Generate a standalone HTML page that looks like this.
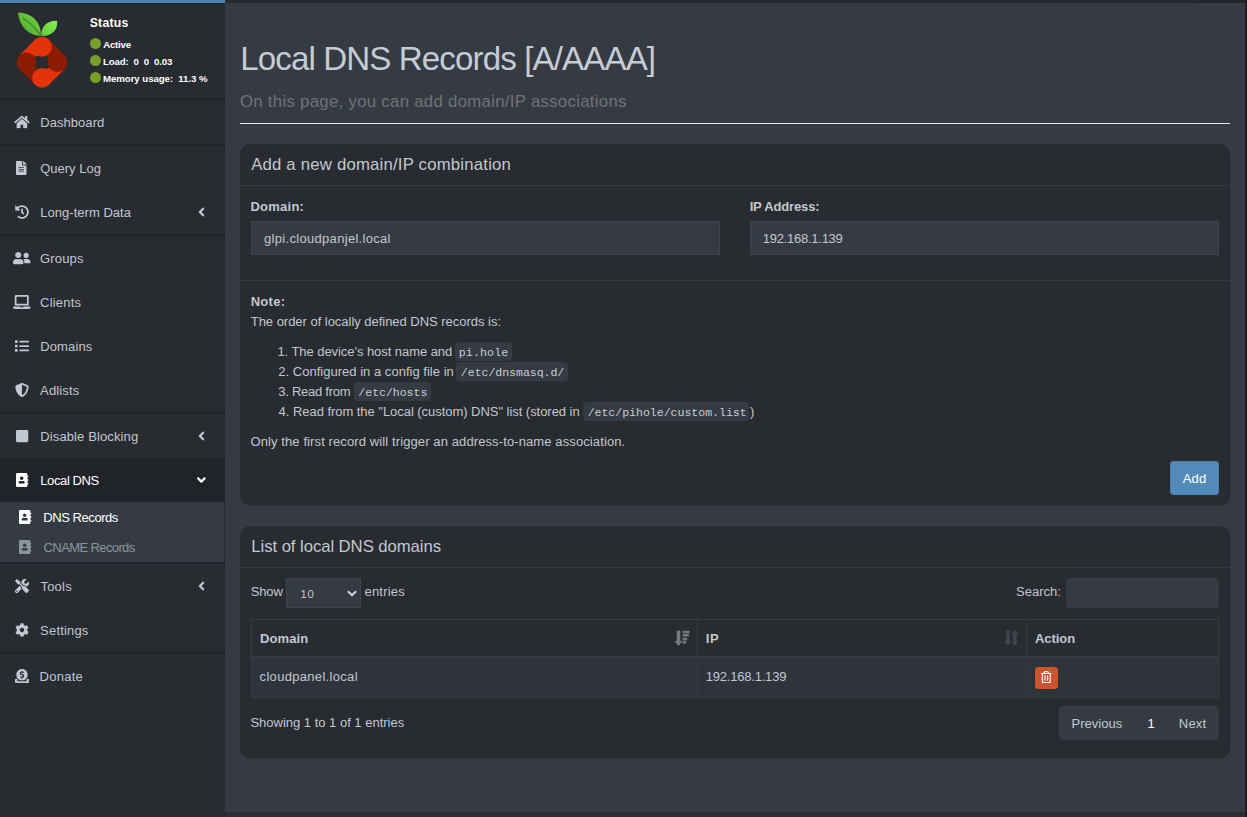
<!DOCTYPE html>
<html lang="en"><head><meta charset="utf-8"><title>Pi-hole - Local DNS Records</title>
<style>

html,body{margin:0;padding:0}
body{width:1247px;height:817px;overflow:hidden;position:relative;background:#363b43;font-family:"Liberation Sans",sans-serif;}
.t{position:absolute;white-space:pre;display:block}
.r{position:absolute;display:block;box-sizing:border-box}
svg{position:absolute;display:block;overflow:visible}

</style></head>
<body>
<!-- bottom edge of fixed header -->
<div id="header-edge">
<div class="r" style="left:0px;top:0px;width:225px;height:3px;background:#4d82b0;"></div>
<div class="r" style="left:225px;top:0px;width:970px;height:3px;background:#272a2f;"></div>
<div class="r" style="left:1195px;top:0px;width:52px;height:3px;background:#222529;"></div>
</div>
<!-- main sidebar: status panel + navigation -->
<aside id="sidebar">
<div class="r" style="left:0px;top:3px;width:225px;height:814px;background:#282b30;"></div>
<div class="r" style="left:0px;top:98px;width:225px;height:2px;background:#212428;"></div>
<div class="r" style="left:0px;top:144px;width:225px;height:2px;background:#212428;"></div>
<div class="r" style="left:0px;top:234px;width:225px;height:2px;background:#212428;"></div>
<div class="r" style="left:0px;top:412px;width:225px;height:2px;background:#212428;"></div>
<div class="r" style="left:0px;top:562px;width:225px;height:2px;background:#212428;"></div>
<div class="r" style="left:0px;top:652px;width:225px;height:2px;background:#212428;"></div>
<div class="r" style="left:0px;top:458px;width:225px;height:44px;background:#202327;"></div>
<div class="r" style="left:0px;top:502px;width:224px;height:60px;background:#363b43;"></div>
<div class="r" style="left:90px;top:38.1px;width:11px;height:11px;background:#76a028;border-radius:50%;"></div>
<div class="r" style="left:90px;top:55.1px;width:11px;height:11px;background:#76a028;border-radius:50%;"></div>
<div class="r" style="left:90px;top:72.2px;width:11px;height:11px;background:#76a028;border-radius:50%;"></div>
<svg width="80" height="95" style="left:0;top:0" viewBox="0 0 80 95"><defs><linearGradient id="lg1" x1="0" y1="1" x2="1" y2="0"><stop offset="0" stop-color="#4fa32e"/><stop offset="1" stop-color="#70d644"/></linearGradient><linearGradient id="lg2" x1="0" y1="1" x2="1" y2="0"><stop offset="0" stop-color="#63c93c"/><stop offset="1" stop-color="#86f052"/></linearGradient></defs><path d="M18 12.9C30 12.2 41.5 21 40.9 35.9C29 35.5 19.5 27 18 12.9Z" fill="url(#lg1)"/><path d="M23 18C29.5 22 36 28.5 40.6 35.7" fill="none" stroke="#3a8826" stroke-width="1.3"/><path d="M57.1 20.9C58.2 29.5 52 36.2 41.4 36C40.8 27 47 20.3 57.1 20.9Z" fill="url(#lg2)"/><path d="M35.07 39.77L19.47 55.37L26.40 62.30L36.00 56.30Q37.00 55.90 38.33 55.79Z" fill="#e2330b"/><circle cx="42.00" cy="46.70" r="9.8" fill="#e2330b"/><path d="M19.47 69.23L35.07 84.83L42.00 77.90L36.00 68.30Q35.60 67.30 35.49 65.97Z" fill="#8c1d03"/><circle cx="26.40" cy="62.30" r="9.8" fill="#8c1d03"/><path d="M48.93 84.83L64.53 69.23L57.60 62.30L48.00 68.30Q47.00 68.70 45.67 68.81Z" fill="#e2330b"/><circle cx="42.00" cy="77.90" r="9.8" fill="#e2330b"/><path d="M64.53 55.37L48.93 39.77L42.00 46.70L48.00 56.30Q48.40 57.30 48.51 58.63Z" fill="#8c1d03"/><circle cx="57.60" cy="62.30" r="9.8" fill="#8c1d03"/><circle cx="42.00" cy="46.70" r="9.8" fill="#e2330b"/></svg><svg width="15.75" height="14.0" viewBox="0 0 576 512" style="left:13.82px;top:115.00px"><path fill="#c1c8cf" d="M280.37 148.26L96 300.11V464a16 16 0 0 0 16 16l112.06-.29a16 16 0 0 0 15.92-16V368a16 16 0 0 1 16-16h64a16 16 0 0 1 16 16v95.64a16 16 0 0 0 16 16.05L464 480a16 16 0 0 0 16-16V300L295.67 148.26a12.19 12.19 0 0 0-15.3 0zM571.6 251.47L488 182.56V44.05a12 12 0 0 0-12-12h-56a12 12 0 0 0-12 12v72.61L318.47 43a48 48 0 0 0-61 0L4.34 251.47a12 12 0 0 0-1.6 16.9l25.5 31A12 12 0 0 0 45.15 301l235.22-193.74a12.19 12.19 0 0 1 15.3 0L530.9 301a12 12 0 0 0 16.9-1.6l25.5-31a12 12 0 0 0-1.7-16.93z"/></svg>
<svg width="10.50" height="14.0" viewBox="0 0 384 512" style="left:16.45px;top:161.00px"><path fill="#c1c8cf" d="M224 136V0H24C10.7 0 0 10.7 0 24v464c0 13.3 10.7 24 24 24h336c13.3 0 24-10.7 24-24V160H248c-13.2 0-24-10.8-24-24zm64 236c0 6.6-5.4 12-12 12H108c-6.6 0-12-5.4-12-12v-8c0-6.6 5.4-12 12-12h168c6.6 0 12 5.4 12 12v8zm0-64c0 6.6-5.4 12-12 12H108c-6.6 0-12-5.4-12-12v-8c0-6.6 5.4-12 12-12h168c6.6 0 12 5.4 12 12v8zm0-72v8c0 6.6-5.4 12-12 12H108c-6.6 0-12-5.4-12-12v-8c0-6.6 5.4-12 12-12h168c6.6 0 12 5.4 12 12zm96-114.1v6.1H256V0h6.1c6.4 0 12.5 2.5 17 7l97.9 98c4.5 4.5 7 10.6 7 16.9z"/></svg>
<svg width="14.00" height="14.0" viewBox="0 0 512 512" style="left:14.70px;top:205.00px"><path fill="#c1c8cf" d="M504 255.531c.253 136.64-111.18 248.372-247.82 248.468-59.015.042-113.223-20.53-155.822-54.911-11.077-8.94-11.905-25.541-1.839-35.607l11.267-11.267c8.609-8.609 22.353-9.551 31.891-1.984C173.062 425.135 212.781 440 256 440c101.705 0 184-82.311 184-184 0-101.705-82.311-184-184-184-48.814 0-93.149 18.969-126.068 49.932l50.754 50.754c10.08 10.08 2.941 27.314-11.313 27.314H24c-8.837 0-16-7.163-16-16V38.627c0-14.254 17.234-21.393 27.314-11.314l49.372 49.372C129.209 34.136 189.552 8 256 8c136.81 0 247.747 110.78 248 247.531zm-180.912 78.784l9.823-12.63c8.138-10.463 6.253-25.542-4.21-33.679L288 256.349V152c0-13.255-10.745-24-24-24h-16c-13.255 0-24 10.745-24 24v135.651l65.409 50.874c10.463 8.137 25.541 6.253 33.679-4.21z"/></svg>
<svg width="17.50" height="14.0" viewBox="0 0 640 512" style="left:12.95px;top:251.00px"><path fill="#c1c8cf" d="M192 256c61.9 0 112-50.1 112-112S253.9 32 192 32 80 82.1 80 144s50.1 112 112 112zm76.8 32h-8.3c-20.8 10-43.900 16-68.500 16s-47.600-6-68.500-16h-8.300C51.600 288 0 339.600 0 403.200V432c0 26.500 21.500 48 48 48h288c26.500 0 48-21.500 48-48v-28.800c0-63.600-51.600-115.200-115.200-115.200zM480 256c53 0 96-43 96-96s-43-96-96-96-96 43-96 96 43 96 96 96zm48 32h-3.800c-13.900 4.800-28.600 8-44.200 8s-30.300-3.200-44.200-8H432c-20.400 0-39.200 5.900-55.700 15.400 24.400 26.300 39.700 61.200 39.700 99.800v38.400c0 2.200-.5 4.300-.6 6.400H592c26.500 0 48-21.500 48-48 0-61.900-50.100-112-112-112z"/></svg>
<svg width="17.50" height="14.0" viewBox="0 0 640 512" style="left:12.95px;top:295.00px"><path fill="#c1c8cf" d="M624 416H381.540c-.740 19.810-14.710 32-32.740 32H288c-18.690 0-33.020-17.470-32.770-32H16c-8.800 0-16 7.200-16 16v16c0 35.200 28.800 64 64 64h512c35.200 0 64-28.800 64-64v-16c0-8.800-7.200-16-16-16zM576 48c0-26.400-21.600-48-48-48H112C85.600 0 64 21.600 64 48v336h512V48zm-64 272H128V64h384v256z"/></svg>
<svg width="14.00" height="14.0" viewBox="0 0 512 512" style="left:14.70px;top:339.00px"><path fill="#c1c8cf" d="M80 368H16a16 16 0 0 0-16 16v64a16 16 0 0 0 16 16h64a16 16 0 0 0 16-16v-64a16 16 0 0 0-16-16zm0-320H16A16 16 0 0 0 0 64v64a16 16 0 0 0 16 16h64a16 16 0 0 0 16-16V64a16 16 0 0 0-16-16zm0 160H16a16 16 0 0 0-16 16v64a16 16 0 0 0 16 16h64a16 16 0 0 0 16-16v-64a16 16 0 0 0-16-16zm416 176H176a16 16 0 0 0-16 16v32a16 16 0 0 0 16 16h320a16 16 0 0 0 16-16v-32a16 16 0 0 0-16-16zm0-320H176a16 16 0 0 0-16 16v32a16 16 0 0 0 16 16h320a16 16 0 0 0 16-16V80a16 16 0 0 0-16-16zm0 160H176a16 16 0 0 0-16 16v32a16 16 0 0 0 16 16h320a16 16 0 0 0 16-16v-32a16 16 0 0 0-16-16z"/></svg>
<svg width="14.00" height="14.0" viewBox="0 0 512 512" style="left:14.70px;top:383.00px"><path fill="#c1c8cf" d="M466.5 83.7l-192-80a48.150 48.150 0 0 0-36.900 0l-192 80C27.700 91.100 16 108.600 16 128c0 198.500 114.500 335.700 221.500 380.300 11.800 4.900 25.100 4.900 36.900 0C360.100 472.600 496 349.300 496 128c0-19.400-11.700-36.900-29.500-44.300zM256.100 446.300l-.1-381 175.900 73.300c-3.300 151.400-82.100 261.100-175.800 307.700z"/></svg>
<svg width="12.25" height="14.0" viewBox="0 0 448 512" style="left:15.57px;top:429.00px"><path fill="#c1c8cf" d="M400 32H48C21.5 32 0 53.5 0 80v352c0 26.500 21.500 48 48 48h352c26.500 0 48-21.500 48-48V80c0-26.500-21.500-48-48-48z"/></svg>
<svg width="14.00" height="14.0" viewBox="0 0 512 512" style="left:14.70px;top:579.00px"><path fill="#c1c8cf" d="M501.1 395.700L384 278.600c-23.100-23.100-57.600-27.600-85.400-13.900L192 158.100V96L64 0 0 64l96 128h62.100l106.600 106.600c-13.600 27.800-9.200 62.300 13.900 85.400l117.100 117.100c14.600 14.600 38.200 14.600 52.700 0l52.700-52.700c14.500-14.600 14.500-38.200 0-52.700zM331.700 225c28.300 0 54.900 11 74.900 31l19.400 19.400c15.800-6.900 30.800-16.500 43.800-29.500 37.100-37.100 49.700-89.300 37.900-136.700-2.200-9-13.500-12.100-20.100-5.500l-74.400 74.400-67.900-11.300L334 98.900l74.400-74.400c6.600-6.600 3.400-17.900-5.700-20.200-47.400-11.700-99.600.9-136.600 37.900-28.500 28.500-41.900 66.100-41.200 103.600l82.100 82.100c8.100-1.900 16.500-2.900 24.700-2.900zm-103.900 82l-56.700-56.700L18.700 402.800c-25 25-25 65.500 0 90.500s65.500 25 90.500 0l123.600-123.600c-7.600-19.900-9.900-41.600-5-62.700zM64 472c-13.200 0-24-10.800-24-24 0-13.300 10.700-24 24-24s24 10.700 24 24c0 13.200-10.700 24-24 24z"/></svg>
<svg width="14.00" height="14.0" viewBox="0 0 512 512" style="left:14.70px;top:623.00px"><path fill="#c1c8cf" d="M487.400 315.700l-42.600-24.600c4.300-23.200 4.300-47 0-70.200l42.600-24.600c4.900-2.800 7.100-8.600 5.500-14-11.100-35.600-30-67.800-54.700-94.600-3.800-4.100-10-5.100-14.800-2.300L380.800 110c-17.900-15.400-38.500-27.300-60.800-35.100V25.800c0-5.600-3.900-10.500-9.400-11.700-36.700-8.200-74.300-7.800-109.200 0-5.500 1.200-9.400 6.100-9.400 11.700V75c-22.200 7.900-42.800 19.800-60.800 35.100L88.700 85.500c-4.900-2.800-11-1.900-14.800 2.300-24.700 26.700-43.600 58.900-54.700 94.600-1.700 5.400.6 11.200 5.500 14L67.300 221c-4.300 23.200-4.300 47 0 70.200l-42.600 24.600c-4.900 2.800-7.100 8.600-5.500 14 11.100 35.600 30 67.800 54.700 94.600 3.800 4.100 10 5.100 14.800 2.300l42.600-24.600c17.900 15.400 38.500 27.300 60.800 35.100v49.200c0 5.600 3.900 10.500 9.400 11.700 36.700 8.200 74.300 7.800 109.200 0 5.500-1.200 9.400-6.100 9.400-11.700v-49.200c22.200-7.900 42.800-19.800 60.800-35.100l42.600 24.600c4.900 2.800 11 1.900 14.800-2.300 24.700-26.700 43.600-58.900 54.700-94.600 1.500-5.500-.7-11.300-5.600-14.100zM256 336c-44.100 0-80-35.900-80-80s35.900-80 80-80 80 35.900 80 80-35.900 80-80 80z"/></svg>
<svg width="14.00" height="14.0" viewBox="0 0 512 512" style="left:14.70px;top:669.00px"><path fill="#c1c8cf" d="M256 416c114.900 0 208-93.100 208-208S370.900 0 256 0 48 93.100 48 208s93.100 208 208 208zM233.800 97.400V80.600c0-9.200 7.400-16.600 16.600-16.600h11.100c9.200 0 16.600 7.400 16.600 16.600v17c15.500.8 30.500 6.100 43 15.400 5.600 4.100 6.200 12.300 1.200 17.100L306 145.600c-3.800 3.700-9.500 3.800-14 1-5.400-3.400-11.400-5.100-17.800-5.100h-38.900c-9 0-16.300 8.200-16.300 18.300 0 8.200 5 15.500 12.100 17.600l62.300 18.700c25.700 7.700 43.700 32.400 43.700 60.100 0 34-26.400 61.500-59.100 62.400v16.800c0 9.200-7.400 16.600-16.600 16.600h-11.100c-9.200 0-16.600-7.400-16.600-16.600v-17c-15.500-.8-30.500-6.100-43-15.400-5.600-4.100-6.200-12.300-1.200-17.100l16.300-15.500c3.800-3.700 9.500-3.800 14-1 5.400 3.400 11.400 5.100 17.800 5.100h38.900c9 0 16.300-8.200 16.300-18.300 0-8.200-5-15.500-12.100-17.600l-62.300-18.700c-25.700-7.700-43.700-32.400-43.700-60.100.1-34 26.400-61.500 59.100-62.400zM480 352h-32.500c-19.600 26-44.600 47.700-73 64h63.800c5.300 0 9.600 3.600 9.600 8v16c0 4.400-4.300 8-9.600 8H73.600c-5.300 0-9.600-3.600-9.600-8v-16c0-4.400 4.300-8 9.600-8h63.800c-28.400-16.300-53.300-38-73-64H32c-17.700 0-32 14.300-32 32v96c0 17.700 14.300 32 32 32h448c17.700 0 32-14.300 32-32v-96c0-17.700-14.300-32-32-32z"/></svg>
<svg width="12.25" height="14.0" viewBox="0 0 448 512" style="left:15.57px;top:473.00px"><path fill="#fff" d="M436 160c6.600 0 12-5.400 12-12v-40c0-6.600-5.400-12-12-12h-20V48c0-26.500-21.500-48-48-48H48C21.500 0 0 21.500 0 48v416c0 26.500 21.500 48 48 48h320c26.500 0 48-21.500 48-48v-48h20c6.600 0 12-5.400 12-12v-40c0-6.600-5.400-12-12-12h-20v-64h20c6.600 0 12-5.400 12-12v-40c0-6.600-5.400-12-12-12h-20v-64h20zm-228-32c35.300 0 64 28.700 64 64s-28.700 64-64 64-64-28.700-64-64 28.700-64 64-64zm112 236.800c0 10.600-10 19.200-22.400 19.200H118.400C106 384 96 375.400 96 364.800v-19.200c0-31.800 30.100-57.600 67.200-57.600h5c12.300 5.100 25.700 8 39.800 8s27.600-2.900 39.800-8h5c37.100 0 67.200 25.800 67.200 57.600v19.200z"/></svg>
<svg width="12.25" height="14.0" viewBox="0 0 448 512" style="left:18.57px;top:510.00px"><path fill="#fff" d="M436 160c6.600 0 12-5.400 12-12v-40c0-6.600-5.400-12-12-12h-20V48c0-26.500-21.500-48-48-48H48C21.500 0 0 21.500 0 48v416c0 26.500 21.500 48 48 48h320c26.500 0 48-21.500 48-48v-48h20c6.600 0 12-5.400 12-12v-40c0-6.600-5.400-12-12-12h-20v-64h20c6.600 0 12-5.400 12-12v-40c0-6.600-5.400-12-12-12h-20v-64h20zm-228-32c35.300 0 64 28.700 64 64s-28.700 64-64 64-64-28.700-64-64 28.700-64 64-64zm112 236.800c0 10.600-10 19.200-22.400 19.200H118.400C106 384 96 375.400 96 364.800v-19.200c0-31.800 30.100-57.600 67.200-57.600h5c12.300 5.100 25.700 8 39.800 8s27.600-2.900 39.800-8h5c37.100 0 67.200 25.800 67.200 57.600v19.200z"/></svg>
<svg width="12.25" height="14.0" viewBox="0 0 448 512" style="left:18.57px;top:540.00px"><path fill="#8a949f" d="M436 160c6.600 0 12-5.400 12-12v-40c0-6.600-5.400-12-12-12h-20V48c0-26.500-21.500-48-48-48H48C21.500 0 0 21.500 0 48v416c0 26.500 21.500 48 48 48h320c26.500 0 48-21.500 48-48v-48h20c6.600 0 12-5.400 12-12v-40c0-6.600-5.400-12-12-12h-20v-64h20c6.600 0 12-5.400 12-12v-40c0-6.600-5.400-12-12-12h-20v-64h20zm-228-32c35.300 0 64 28.700 64 64s-28.700 64-64 64-64-28.700-64-64 28.700-64 64-64zm112 236.800c0 10.600-10 19.200-22.400 19.200H118.400C106 384 96 375.400 96 364.800v-19.200c0-31.800 30.100-57.600 67.200-57.600h5c12.300 5.100 25.700 8 39.800 8s27.600-2.900 39.800-8h5c37.100 0 67.200 25.800 67.200 57.600v19.200z"/></svg>
<svg width="7.00" height="14.0" viewBox="0 0 256 512" style="left:197.70px;top:205.30px"><path fill="#c1c8cf" d="M31.7 239l136-136c9.400-9.400 24.600-9.400 33.900 0l22.600 22.600c9.400 9.400 9.400 24.600 0 33.900L127.900 256l96.400 96.400c9.400 9.400 9.400 24.600 0 33.900L201.700 409c-9.400 9.400-24.600 9.400-33.900 0l-136-136c-9.500-9.400-9.500-24.600-.1-34z"/></svg>
<svg width="7.00" height="14.0" viewBox="0 0 256 512" style="left:197.70px;top:429.30px"><path fill="#c1c8cf" d="M31.7 239l136-136c9.400-9.400 24.600-9.400 33.900 0l22.600 22.600c9.400 9.400 9.400 24.600 0 33.900L127.900 256l96.400 96.400c9.400 9.400 9.400 24.600 0 33.900L201.700 409c-9.400 9.400-24.600 9.400-33.900 0l-136-136c-9.500-9.400-9.500-24.600-.1-34z"/></svg>
<svg width="7.00" height="14.0" viewBox="0 0 256 512" style="left:197.70px;top:579.30px"><path fill="#c1c8cf" d="M31.7 239l136-136c9.400-9.400 24.600-9.400 33.900 0l22.600 22.600c9.400 9.400 9.400 24.600 0 33.900L127.900 256l96.400 96.400c9.400 9.400 9.400 24.600 0 33.900L201.700 409c-9.400 9.400-24.600 9.400-33.900 0l-136-136c-9.500-9.400-9.500-24.600-.1-34z"/></svg>
<svg width="8.75" height="14.0" viewBox="0 0 320 512" style="left:197.22px;top:472.80px"><path fill="#fff" d="M143 352.300L7 216.300c-9.400-9.400-9.400-24.600 0-33.900l22.600-22.600c9.400-9.400 24.600-9.400 33.900 0l96.400 96.400 96.400-96.400c9.400-9.400 24.600-9.400 33.900 0l22.600 22.600c9.400 9.400 9.400 24.600 0 33.900l-136 136c-9.200 9.400-24.400 9.400-33.800 0z"/></svg>
<span class="t" style="left:89.74px;top:14.66px;font-size:12.25px;line-height:16px;letter-spacing:0.217px;color:#fff;font-weight:700;">Status</span>
<span class="t" style="left:103.23px;top:37.95px;font-size:9.68px;line-height:13px;letter-spacing:-0.238px;color:#fff;font-weight:700;">Active</span>
<span class="t" style="left:103.02px;top:54.95px;font-size:9.68px;line-height:13px;letter-spacing:-0.167px;color:#fff;font-weight:700;">Load:  0  0  0.03</span>
<span class="t" style="left:103.02px;top:71.95px;font-size:9.68px;line-height:13px;letter-spacing:-0.071px;color:#fff;font-weight:700;">Memory usage:  11.3 %</span>
<span class="t" style="left:40.25px;top:113.99px;font-size:13.02px;line-height:17px;letter-spacing:0.042px;color:#c1c8cf;">Dashboard</span>
<span class="t" style="left:40.15px;top:159.99px;font-size:13.02px;line-height:17px;letter-spacing:0.001px;color:#c1c8cf;">Query Log</span>
<span class="t" style="left:40.25px;top:203.99px;font-size:13.02px;line-height:17px;letter-spacing:0.023px;color:#c1c8cf;">Long-term Data</span>
<span class="t" style="left:40.10px;top:249.99px;font-size:13.02px;line-height:17px;letter-spacing:0.122px;color:#c1c8cf;">Groups</span>
<span class="t" style="left:40.11px;top:293.99px;font-size:13.02px;line-height:17px;letter-spacing:0.188px;color:#c1c8cf;">Clients</span>
<span class="t" style="left:40.25px;top:337.99px;font-size:13.02px;line-height:17px;letter-spacing:0.112px;color:#c1c8cf;">Domains</span>
<span class="t" style="left:40.09px;top:381.99px;font-size:13.02px;line-height:17px;letter-spacing:0.131px;color:#c1c8cf;">Adlists</span>
<span class="t" style="left:40.25px;top:427.99px;font-size:13.02px;line-height:17px;letter-spacing:0.115px;color:#c1c8cf;">Disable Blocking</span>
<span class="t" style="left:40.25px;top:471.99px;font-size:13.02px;line-height:17px;letter-spacing:-0.395px;color:#fff;">Local DNS</span>
<span class="t" style="left:43.32px;top:508.99px;font-size:13.02px;line-height:17px;letter-spacing:-0.450px;color:#fff;">DNS Records</span>
<span class="t" style="left:43.57px;top:538.99px;font-size:13.02px;line-height:17px;letter-spacing:-0.618px;color:#8a949f;">CNAME Records</span>
<span class="t" style="left:40.38px;top:577.99px;font-size:13.02px;line-height:17px;letter-spacing:0.245px;color:#c1c8cf;">Tools</span>
<span class="t" style="left:40.12px;top:621.99px;font-size:13.02px;line-height:17px;letter-spacing:0.177px;color:#c1c8cf;">Settings</span>
<span class="t" style="left:39.49px;top:667.99px;font-size:13.02px;line-height:17px;letter-spacing:0.263px;color:#c1c8cf;">Donate</span>
</aside>
<main id="content">
<header id="page-header">
<div class="r" style="left:240px;top:123px;width:990px;height:1px;background:#e6e6e6;"></div>
<span class="t" style="left:240.22px;top:37.02px;font-size:33.12px;line-height:43px;letter-spacing:-0.886px;color:#c5ccd3;">Local DNS Records [A/AAAA]</span>
<span class="t" style="left:239.94px;top:91.20px;font-size:16.74px;line-height:22px;letter-spacing:0.312px;color:#707276;">On this page, you can add domain/IP associations</span>
</header>
<!-- box: add a new domain/IP combination -->
<section id="box-add">
<div class="r" style="left:240px;top:144px;width:990px;height:361px;background:#282b30;border-radius:10px;box-shadow:0 1px 1px rgba(0,0,0,.12);"></div>
<div class="r" style="left:240px;top:185px;width:990px;height:1px;background:#363a41;"></div>
<div class="r" style="left:240px;top:280px;width:990px;height:1px;background:#363a41;"></div>
<div class="r" style="left:251px;top:221px;width:469px;height:34px;background:#363b43;border:1px solid #3f444c;"></div>
<div class="r" style="left:750px;top:221px;width:469px;height:34px;background:#363b43;border:1px solid #3f444c;"></div>
<div class="r" style="left:454.8px;top:342.3px;width:57px;height:18.5px;background:#363a42;border-radius:4px;"></div>
<div class="r" style="left:456.4px;top:362.3px;width:111.4px;height:18.5px;background:#363a42;border-radius:4px;"></div>
<div class="r" style="left:354.3px;top:382.3px;width:76.5px;height:18.5px;background:#363a42;border-radius:4px;"></div>
<div class="r" style="left:583.1px;top:402.3px;width:166.3px;height:18.5px;background:#363a42;border-radius:4px;"></div>
<div class="r" style="left:1170px;top:461px;width:49px;height:34px;background:#528aba;border-radius:3px;border:1px solid #4a7faf;"></div>
<span class="t" style="left:251.14px;top:154.20px;font-size:16.74px;line-height:22px;letter-spacing:0.203px;color:#c2c8ce;">Add a new domain/IP combination</span>
<span class="t" style="left:250.44px;top:197.99px;font-size:13.02px;line-height:17px;letter-spacing:0.242px;color:#c2c8ce;font-weight:700;">Domain:</span>
<span class="t" style="left:749.64px;top:197.99px;font-size:13.02px;line-height:17px;letter-spacing:-0.169px;color:#c2c8ce;font-weight:700;">IP Address:</span>
<span class="t" style="left:264.08px;top:229.99px;font-size:13.02px;line-height:17px;letter-spacing:0.301px;color:#c2c8ce;">glpi.cloudpanjel.local</span>
<span class="t" style="left:762.81px;top:229.99px;font-size:13.02px;line-height:17px;letter-spacing:-0.268px;color:#c2c8ce;">192.168.1.139</span>
<span class="t" style="left:250.64px;top:292.99px;font-size:13.02px;line-height:17px;letter-spacing:0.321px;color:#c2c8ce;font-weight:700;">Note:</span>
<span class="t" style="left:250.73px;top:312.99px;font-size:13.02px;line-height:17px;letter-spacing:-0.034px;color:#c2c8ce;">The order of locally defined DNS records is:</span>
<span class="t" style="left:277.38px;top:342.99px;font-size:13.02px;line-height:17px;letter-spacing:-0.063px;color:#c2c8ce;">1. The device's host name and</span>
<span class="t" style="left:278.27px;top:362.99px;font-size:13.02px;line-height:17px;letter-spacing:0.013px;color:#c2c8ce;">2. Configured in a config file in</span>
<span class="t" style="left:278.28px;top:382.99px;font-size:13.02px;line-height:17px;letter-spacing:-0.265px;color:#c2c8ce;">3. Read from</span>
<span class="t" style="left:278.59px;top:402.99px;font-size:13.02px;line-height:17px;letter-spacing:-0.049px;color:#c2c8ce;">4. Read from the &quot;Local (custom) DNS&quot; list (stored in</span>
<span class="t" style="left:749.94px;top:402.99px;font-size:13.02px;line-height:17px;letter-spacing:-1.469px;color:#c2c8ce;">)</span>
<span class="t" style="left:250.41px;top:432.99px;font-size:13.02px;line-height:17px;letter-spacing:0.101px;color:#c2c8ce;">Only the first record will trigger an address-to-name association.</span>
<span class="t" style="left:1182.66px;top:469.99px;font-size:13.02px;line-height:17px;letter-spacing:0.199px;color:#fff;">Add</span>
<span class="t" style="left:458.81px;top:345.41px;font-size:11.60px;line-height:15px;letter-spacing:0.120px;color:#c7cdd3;font-family:'Liberation Mono', monospace;">pi.hole</span>
<span class="t" style="left:460.85px;top:365.41px;font-size:11.60px;line-height:15px;letter-spacing:-0.064px;color:#c7cdd3;font-family:'Liberation Mono', monospace;">/etc/dnsmasq.d/</span>
<span class="t" style="left:358.35px;top:385.41px;font-size:11.60px;line-height:15px;letter-spacing:-0.061px;color:#c7cdd3;font-family:'Liberation Mono', monospace;">/etc/hosts</span>
<span class="t" style="left:587.63px;top:405.41px;font-size:11.60px;line-height:15px;letter-spacing:-0.042px;color:#c7cdd3;font-family:'Liberation Mono', monospace;">/etc/pihole/custom.list</span>
</section>
<!-- box: list of local DNS domains -->
<section id="box-list">
<div class="r" style="left:240px;top:526px;width:990px;height:231.5px;background:#282b30;border-radius:10px;box-shadow:0 1px 1px rgba(0,0,0,.12);"></div>
<div class="r" style="left:240px;top:567px;width:990px;height:1px;background:#363a41;"></div>
<div class="r" style="left:286px;top:578px;width:75px;height:30px;background:#363b43;border:1px solid #3f444c;"></div>
<div class="r" style="left:1066px;top:578px;width:153px;height:30px;background:#363b43;border-radius:4px;"></div>
<div class="r" style="left:251px;top:619px;width:968px;height:79px;background:transparent;border:1px solid #363a41;"></div>
<div class="r" style="left:252px;top:657px;width:966px;height:40px;background:#2f333a;"></div>
<div class="r" style="left:251px;top:656px;width:968px;height:2px;background:#363a41;"></div>
<div class="r" style="left:697px;top:619px;width:1px;height:79px;background:#363a41;"></div>
<div class="r" style="left:1026px;top:619px;width:1px;height:79px;background:#363a41;"></div>
<div class="r" style="left:1035px;top:667px;width:23px;height:22px;background:#cb5533;border-radius:3px;border:1px solid #d5521f;"></div>
<div class="r" style="left:1059px;top:706px;width:160px;height:34px;background:#363b43;border-radius:4px;"></div>
<svg width="20" height="20" viewBox="0 0 20 20" style="left:674px;top:628px"><g fill="#73787e"><rect x="2.7" y="2.5" width="3.6" height="11"/><path d="M0.4 13.1H8.5L4.45 17.9Z"/><rect x="8.6" y="2.7" width="7.2" height="2.6"/><rect x="8.6" y="6.0" width="6.3" height="2.6"/><rect x="8.6" y="9.8" width="4.6" height="2.6"/><rect x="8.6" y="13.1" width="3.6" height="2.6"/></g></svg><svg width="20" height="20" viewBox="0 0 20 20" style="left:1004px;top:628px"><g fill="#42464c"><rect x="2.2" y="2.5" width="3.6" height="11"/><path d="M-0.2 13.1H8L3.9 17.8Z"/><rect x="9.1" y="6.4" width="3.7" height="10.8"/><path d="M7 6.6H15.1L11 2.3Z"/></g></svg><svg width="10.50" height="12" viewBox="0 0 448 512" style="left:1041.20px;top:671.00px"><path fill="#fff" d="M268 416h24a12 12 0 0 0 12-12V188a12 12 0 0 0-12-12h-24a12 12 0 0 0-12 12v216a12 12 0 0 0 12 12zM432 80h-82.410l-34-56.700A48 48 0 0 0 274.410 0H173.590a48 48 0 0 0-41.160 23.300L98.410 80H16A16 16 0 0 0 0 96v16a16 16 0 0 0 16 16h16v336a48 48 0 0 0 48 48h288a48 48 0 0 0 48-48V128h16a16 16 0 0 0 16-16V96a16 16 0 0 0-16-16zM171.840 50.910A6 6 0 0 1 177 48h94a6 6 0 0 1 5.150 2.910L293.610 80H154.390zM368 464H80V128h288zm-212-48h24a12 12 0 0 0 12-12V188a12 12 0 0 0-12-12h-24a12 12 0 0 0-12 12v216a12 12 0 0 0 12 12z"/></svg><svg width="12" height="8" viewBox="0 0 12 8" style="left:346px;top:589px"><path d="M1.9 2.2L6 6.2L10.1 2.2" fill="none" stroke="#d5dae0" stroke-width="1.9"/></svg>
<span class="t" style="left:251.33px;top:536.20px;font-size:16.74px;line-height:22px;letter-spacing:-0.077px;color:#c2c8ce;">List of local DNS domains</span>
<span class="t" style="left:250.87px;top:582.99px;font-size:13.02px;line-height:17px;letter-spacing:-0.212px;color:#c2c8ce;">Show</span>
<span class="t" style="left:300.58px;top:586.63px;font-size:11.16px;line-height:15px;letter-spacing:0.757px;color:#c2c8ce;">10</span>
<span class="t" style="left:364.50px;top:582.99px;font-size:13.02px;line-height:17px;letter-spacing:0.196px;color:#c2c8ce;">entries</span>
<span class="t" style="left:1016.12px;top:582.99px;font-size:13.02px;line-height:17px;letter-spacing:0.000px;color:#c2c8ce;">Search:</span>
<span class="t" style="left:260.02px;top:629.99px;font-size:13.02px;line-height:17px;letter-spacing:0.096px;color:#c2c8ce;font-weight:700;">Domain</span>
<span class="t" style="left:705.79px;top:629.99px;font-size:13.02px;line-height:17px;letter-spacing:0.621px;color:#c2c8ce;font-weight:700;">IP</span>
<span class="t" style="left:1034.94px;top:629.99px;font-size:13.02px;line-height:17px;letter-spacing:-0.063px;color:#c2c8ce;font-weight:700;">Action</span>
<span class="t" style="left:259.58px;top:667.99px;font-size:13.02px;line-height:17px;letter-spacing:0.308px;color:#c2c8ce;">cloudpanel.local</span>
<span class="t" style="left:705.68px;top:667.99px;font-size:13.02px;line-height:17px;letter-spacing:-0.207px;color:#c2c8ce;">192.168.1.139</span>
<span class="t" style="left:250.42px;top:713.99px;font-size:13.02px;line-height:17px;letter-spacing:-0.013px;color:#c2c8ce;">Showing 1 to 1 of 1 entries</span>
<span class="t" style="left:1071.49px;top:714.99px;font-size:13.02px;line-height:17px;letter-spacing:0.020px;color:#c2c8ce;">Previous</span>
<span class="t" style="left:1147.62px;top:714.99px;font-size:13.02px;line-height:17px;letter-spacing:-1.335px;color:#fff;">1</span>
<span class="t" style="left:1178.85px;top:714.99px;font-size:13.02px;line-height:17px;letter-spacing:0.194px;color:#c2c8ce;">Next</span>
</section>
</main>
<div id="page-edges">
<div class="r" style="left:225px;top:812px;width:1022px;height:5px;background:#2a2d33;"></div>
<div class="r" style="left:1245px;top:0px;width:2px;height:817px;background:#1d1e20;"></div>
</div>
</body></html>
